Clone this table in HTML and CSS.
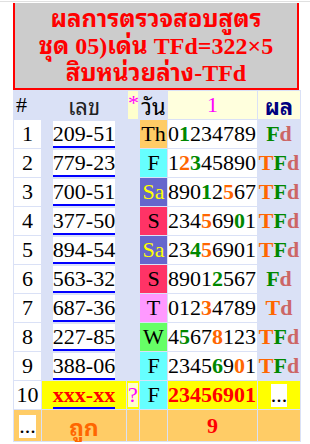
FILE: index.html
```html
<!DOCTYPE html>
<html lang="th">
<head>
<meta charset="utf-8">
<link rel="stylesheet" href="styles.css">
</head>
<body>
<div class="topline"></div>
<div class="page">
  <div class="title">ผลการตรวจสอบสูตร<br>ชุด 05)เด่น TFd=322×5<br>สิบหน่วยล่าง-TFd</div>
  <table class="grid">
    <thead>
      <tr>
        <th class="c-no hash">#</th>
        <th class="c-num thai">เลข</th>
        <th class="c-star"><span class="star">*</span></th>
        <th class="c-day thai">วัน</th>
        <th class="c-dig one">1</th>
        <th class="c-res thai res-h">ผล</th>
      </tr>
    </thead>
    <tbody>
      <tr><td class="no">1</td><td class="num"><span class="lnk">209-51</span></td><td></td><td class="day th">Th</td><td class="dig">0<b class="g">1</b>234789</td><td class="res"><b class="F">F</b><b class="d">d</b></td></tr>
      <tr><td class="no">2</td><td class="num"><span class="lnk">779-23</span></td><td></td><td class="day fr">F</td><td class="dig">1<b class="o">2</b><b class="g">3</b>45890</td><td class="res"><b class="T">T</b><b class="F">F</b><b class="d">d</b></td></tr>
      <tr><td class="no">3</td><td class="num"><span class="lnk">700-51</span></td><td></td><td class="day sa">Sa</td><td class="dig">890<b class="g">1</b>2<b class="o">5</b>67</td><td class="res"><b class="T">T</b><b class="F">F</b><b class="d">d</b></td></tr>
      <tr><td class="no">4</td><td class="num"><span class="lnk">377-50</span></td><td></td><td class="day su">S</td><td class="dig">234<b class="o">5</b>69<b class="g">0</b>1</td><td class="res"><b class="T">T</b><b class="F">F</b><b class="d">d</b></td></tr>
      <tr><td class="no">5</td><td class="num"><span class="lnk">894-54</span></td><td></td><td class="day sa">Sa</td><td class="dig">23<b class="g">4</b><b class="o">5</b>6901</td><td class="res"><b class="T">T</b><b class="F">F</b><b class="d">d</b></td></tr>
      <tr><td class="no">6</td><td class="num"><span class="lnk">563-32</span></td><td></td><td class="day su">S</td><td class="dig">8901<b class="g">2</b>567</td><td class="res"><b class="F">F</b><b class="d">d</b></td></tr>
      <tr><td class="no">7</td><td class="num"><span class="lnk">687-36</span></td><td></td><td class="day tu">T</td><td class="dig">012<b class="o">3</b>4789</td><td class="res"><b class="T">T</b><b class="d">d</b></td></tr>
      <tr><td class="no">8</td><td class="num"><span class="lnk">227-85</span></td><td></td><td class="day we">W</td><td class="dig">4<b class="g">5</b>67<b class="o">8</b>123</td><td class="res"><b class="T">T</b><b class="F">F</b><b class="d">d</b></td></tr>
      <tr><td class="no">9</td><td class="num"><span class="lnk">388-06</span></td><td></td><td class="day fr">F</td><td class="dig">2345<b class="g">6</b>9<b class="o">0</b>1</td><td class="res"><b class="T">T</b><b class="F">F</b><b class="d">d</b></td></tr>
      <tr class="next"><td class="no">10</td><td class="num yel"><span class="xx">xxx-xx</span></td><td class="q"><span class="qm">?</span></td><td class="day fr">F</td><td class="dig yel red">23456901</td><td class="res yel"><span class="dots">...</span></td></tr>
      <tr class="sum"><td class="no-sum"><span class="dots">...</span></td><td class="hit thai">ถูก</td><td></td><td></td><td class="cnt">9</td><td></td></tr>
    </tbody>
  </table>
</div>
</body>
</html>
```
FILE: styles.css
```css
html, body {
  margin: 0;
  padding: 0;
  background: #ffffff;
}
body {
  font-family: "Liberation Serif", "Noto Sans Thai Looped", Tahoma, "Noto Sans Thai", serif;
}
.topline {
  height: 1px;
  margin-top: 1px;
  background: #e0e0e0;
}
.page {
  padding-left: 13px;
  width: 286px;
}
.title {
  box-sizing: border-box;
  height: 87px;
  margin-top: 1px;
  padding-top: 3px;
  background: #cccccc;
  border: 2px solid #ff0000;
  border-top: none;
  color: #ff0000;
  font-weight: bold;
  font-size: 24px;
  line-height: 27px;
  text-align: center;
}
.grid {
  width: 286px;
  border-collapse: separate;
  border-spacing: 1px;
  background: #dae1f6;
  table-layout: fixed;
  font-size: 22px;
}
.grid th, .grid td {
  padding: 0;
  height: 28px;
  text-align: center;
  vertical-align: middle;
  white-space: nowrap;
  font-weight: normal;
  line-height: 24px;
}
.grid td.dig, .grid td.day {
  overflow: hidden;
}
.grid .thai {
  font-family: "Noto Sans Thai Looped", Tahoma, "Liberation Sans", "Noto Sans Thai", sans-serif;
  line-height: 24px;
  overflow: visible;
}
.c-no { width: 25px; }
.c-num { width: 84px; }
.c-star { width: 12px; }
.c-day { width: 27px; }
.c-dig { width: 89px; }
.c-res { width: 42px; }
th.hash { text-align: left; padding-left: 2px; }
th.c-num { color: #222222; }
th.c-star { background: #dae1f6; }
.star {
  display: inline-block;
  width: 10px;
  height: 28px;
  background: #ffffcc;
  color: #ff00ff;
}
th.one {
  background: #ffffdd;
  color: #ff00ff;
}
th.res-h {
  background: #ffffdd;
  color: #000080;
  font-weight: bold;
}
td.no {
  background: #ffffff;
}
.lnk {
  background: #ffffff;
  border-bottom: 2px solid #0000ff;
}
.day.th { background: #ffcc66; }
.day.fr { background: #66ffff; }
.day.sa { background: #6666cc; color: #ffff00; }
.day.su { background: #ff3366; }
.day.tu { background: #ff99ff; }
.day.we { background: #66ff66; }
td.dig {
  background: #ffffff;
  text-align: left;
}
.g { color: #008800; }
.o { color: #ff6600; }
.res b { font-weight: bold; }
.T { color: #ff6600; }
.F { color: #008800; }
.d { color: #cc6666; }
.yel { background: #ffff00 !important; }
td.dig.red {
  color: #ff0000;
  font-weight: bold;
}
.xx {
  color: #ff0000;
  font-weight: bold;
  border-bottom: 2px solid #0000ff;
}
td.q { background: #ffff00; }
.qm {
  display: inline-block;
  width: 10px;
  background: #ffffcc;
  color: #ff00ff;
}
.dots {
  display: inline-block;
  background: #ffffff;
  color: #000000;
  line-height: 22px;
  padding-bottom: 1px;
}
.sum td {
  background: #ffcc66;
  height: 31px;
}
.grid .hit {
  color: #ff6600;
  font-weight: bold;
  font-size: 23px;
}
.grid .cnt {
  color: #ff0000;
  font-weight: bold;
}
```
